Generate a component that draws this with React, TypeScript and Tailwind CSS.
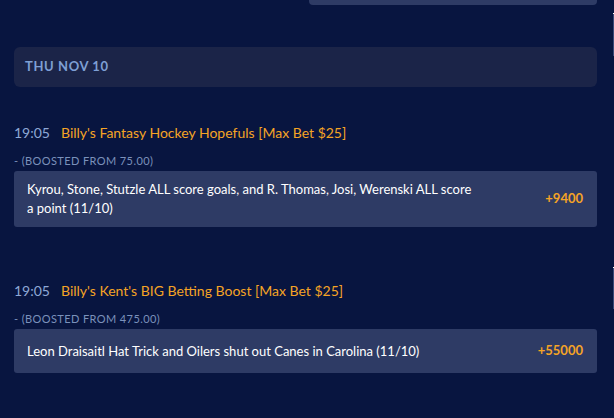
import React from "react";

type Boost = {
  time: string;
  title: string;
  boostedFrom: string;
  selection: string;
  odds: string;
};

const boosts: Boost[] = [
  {
    time: "19:05",
    title: "Billy's Fantasy Hockey Hopefuls [Max Bet $25]",
    boostedFrom: "75.00",
    selection:
      "Kyrou, Stone, Stutzle ALL score goals, and R. Thomas, Josi, Werenski ALL score a point (11/10)",
    odds: "+9400",
  },
  {
    time: "19:05",
    title: "Billy's Kent's BIG Betting Boost [Max Bet $25]",
    boostedFrom: "475.00",
    selection: "Leon Draisaitl Hat Trick and Oilers shut out Canes in Carolina (11/10)",
    odds: "+55000",
  },
];

function BoostRow({ b }: { b: Boost }) {
  return (
    <div className="flex flex-col">
      <div className="flex items-center h-[20px] text-[14px] leading-[20px]">
        <span className="text-[#8ea8d6] w-[47px]">{b.time}</span>
        <span className="text-[#f5a425]">{b.title}</span>
      </div>
      <div className="mt-[11px] h-[14px] text-[11px] leading-[14px] tracking-[0.4px] text-[#7b91bb] uppercase">
        - (Boosted from {b.boostedFrom})
      </div>
      <div className="mt-[3px] flex items-center justify-between rounded-[3px] bg-[#2e3b65] pl-[13px] pr-[14px] py-[9px] min-h-[44px]">
        <div className="text-[13px] leading-[19px] text-white max-w-[449px]">{b.selection}</div>
        <div className="text-[13px] font-bold text-[#f5a425]">{b.odds}</div>
      </div>
    </div>
  );
}

export default function App() {
  return (
    <div
      className="relative w-[614px] h-[418px] overflow-hidden bg-[#081540]"
      style={{ fontFamily: "Lato, 'Noto Sans', sans-serif" }}
    >
      <div className="pl-[14px] pr-[17px]">
        <div className="flex justify-end">
          <div className="h-[5px] w-[288px] rounded-b-[4px] bg-[#2e3b65]" />
        </div>
        <div className="mt-[42px] h-[40px] rounded-[6px] bg-[#1b2448] flex items-center pl-[11px]">
          <span className="text-[13px] font-bold tracking-[0.6px] text-[#7e9fd4]">THU NOV 10</span>
        </div>
        <div className="mt-[36px]">
          <BoostRow b={boosts[0]} />
        </div>
        <div className="mt-[54px]">
          <BoostRow b={boosts[1]} />
        </div>
      </div>
      {/* edge of the neighbouring scroll pane */}
      <div className="absolute left-[613px] top-[13px] w-[1px] h-[43px] bg-[#3a4a78] border-t border-white" />
      <div className="absolute left-[613px] top-[267px] w-[1px] h-[42px] bg-[#3a4a78] border-t border-white" />
    </div>
  );
}
